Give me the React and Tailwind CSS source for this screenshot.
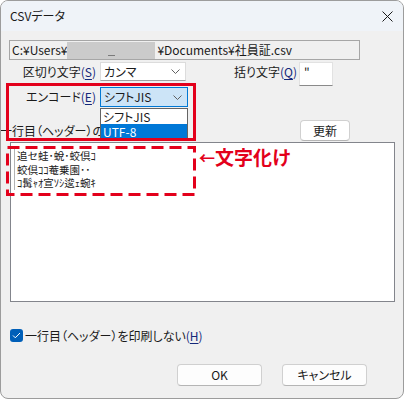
import React from 'react';

const Key = ({ k }) => (
  <span className="text-[#14287a]">
    (<span className="underline underline-offset-2">{k}</span>)
  </span>
);

const Chevron = () => (
  <svg width="9" height="5" viewBox="0 0 9 5" className="shrink-0">
    <polyline points="0.5,0.5 4.5,4.5 8.5,0.5" fill="none" stroke="#606060" strokeWidth="1" />
  </svg>
);

const App = () => {
  return (
    <div className="relative w-[405px] h-[400px] bg-white [font-family:'Noto_Sans_CJK_JP',sans-serif] [font-feature-settings:'palt'] text-[12px] text-[#1a1a1a] leading-none">
      <div className="w-[404px] h-[399px] rounded-[8px] border border-[#9c9c9c] overflow-hidden flex flex-col bg-[#f0f0f0]">
        {/* title bar */}
        <div className="h-[30px] shrink-0 bg-[#eff3f8] flex items-center justify-between pl-[9px] pr-[10px]">
          <span className="text-[12px]">CSVデータ</span>
          <svg width="11" height="11" viewBox="0 0 11 11">
            <path d="M0.5 0.5 L10.5 10.5 M10.5 0.5 L0.5 10.5" stroke="#1a1a1a" strokeWidth="1" />
          </svg>
        </div>

        <div className="relative flex-1 flex flex-col">
          {/* path */}
          <div className="mt-[9px] ml-[8px] w-[351px] h-[20px] border border-[#a6a6a6] flex items-center px-[2px] whitespace-nowrap">
            <span>C:¥Users¥</span>
            <span className="w-[88px] h-[17px] bg-[#cbcbcb] flex items-end justify-center pb-[3px]">
              <span className="w-[7px] h-[1px] bg-[#7a7a7a] mt-auto" />
            </span>
            <span className="ml-[2px]">¥Documents¥社員証.csv</span>
          </div>

          {/* separator / quote row */}
          <div className="mt-[2px] h-[25px] flex items-start">
            <div className="w-[97px] h-[20px] flex items-center justify-end pr-[2px]">
              区切り文字<Key k="S" />
            </div>
            <div className="ml-[2px] w-[86px] h-[19px] bg-white border border-[#dcdcdc] border-b-[#a0a0a0] flex items-center justify-between pl-[3px] pr-[5px]">
              <span>カンマ</span>
              <Chevron />
            </div>
            <div className="w-[113px] h-[20px] flex items-center justify-end pr-[2px]">
              括り文字<Key k="Q" />
            </div>
            <div className="w-[34px] h-[24px] bg-white border border-[#e2e2e2] border-b-[#8a8a8a] pl-[4px] pt-[3px]">
              "
            </div>
          </div>

          {/* encode row */}
          <div className="h-[20px] flex items-center">
            <div className="w-[97px] flex justify-end pr-[2px]">
              エンコード<Key k="E" />
            </div>
            <div className="ml-[2px] w-[88px] h-[20px] bg-[#cce4f7] border border-[#0078d4] flex items-center justify-between pl-[3px] pr-[5px]">
              <span>シフトJIS</span>
              <Chevron />
            </div>
          </div>

          {/* header row */}
          <div className="mt-[13px] h-[21px] flex items-center">
            <span className="ml-[-1px] whitespace-nowrap">一行目（ヘッダー）の区切り</span>
            <div className="ml-auto mr-[53px] w-[50px] h-[21px] bg-white border border-[#d0d0d0] border-b-[#b5b5b5] rounded-[4px] flex items-center justify-center">
              更新
            </div>
          </div>

          {/* text area */}
          <div className="mt-px ml-[9px] w-[385px] h-[160px] bg-white border border-[#83858c] pl-[3px] pt-[6px]">
            <div className="border-l border-[#b4b4b4] pl-[2px] w-fit text-[10.5px] leading-[13.5px] [font-feature-settings:normal] text-[#202020]">
              <div>追セ蛙･蛻･蛟倶ｺ</div>
              <div>蛟倶ｺｺ菴乗園･･</div>
              <div>ｺ髯ｬｵ宣ｿｼ逡ｪ蜿ｷ</div>
            </div>
          </div>

          {/* checkbox */}
          <div className="mt-[27px] ml-[9px] flex items-center gap-[2px]">
            <div className="w-[13px] h-[13px] rounded-[3px] bg-[#005fb8] flex items-center justify-center">
              <svg width="9" height="7" viewBox="0 0 9 7">
                <polyline points="1,3.5 3.3,5.8 8,1" fill="none" stroke="white" strokeWidth="1" />
              </svg>
            </div>
            <span>
              一行目（ヘッダー）を印刷しない<Key k="H" />
            </span>
          </div>

          {/* buttons */}
          <div className="mt-[22px] flex justify-end gap-[20px] pr-[36px]">
            <div className="w-[85px] h-[22px] bg-[#fdfdfd] border border-[#d0d0d0] border-b-[#b5b5b5] rounded-[4px] flex items-center justify-center">
              OK
            </div>
            <div className="w-[85px] h-[22px] bg-[#fdfdfd] border border-[#d0d0d0] border-b-[#b5b5b5] rounded-[4px] flex items-center justify-center">
              キャンセル
            </div>
          </div>

          {/* dropdown list (overlay) */}
          <div className="absolute left-[99px] top-[77px] w-[88px] h-[33px] bg-white border border-[#646464] flex flex-col">
            <div className="h-[15px] flex items-center pl-[2px]">シフトJIS</div>
            <div className="h-[16px] bg-[#0078d7] text-white flex items-center pl-[2px]">UTF-8</div>
          </div>
        </div>
      </div>

      {/* annotations */}
      <div className="absolute left-[6px] top-[83px] w-[190px] h-[58px] border-[3px] border-[#e3001b]" />
      <svg className="absolute left-[6px] top-[146px]" width="190" height="50" viewBox="0 0 190 50">
        <rect x="1.5" y="1.5" width="187" height="47" fill="none" stroke="#e3001b" strokeWidth="3" strokeDasharray="12 6" />
      </svg>
      <div className="absolute left-[199px] top-[147px] flex items-center text-[#e3001b] font-bold text-[19px] leading-none">
        <span className="text-[16px]">←</span>
        <span>文字化け</span>
      </div>
    </div>
  );
};

export default App;
